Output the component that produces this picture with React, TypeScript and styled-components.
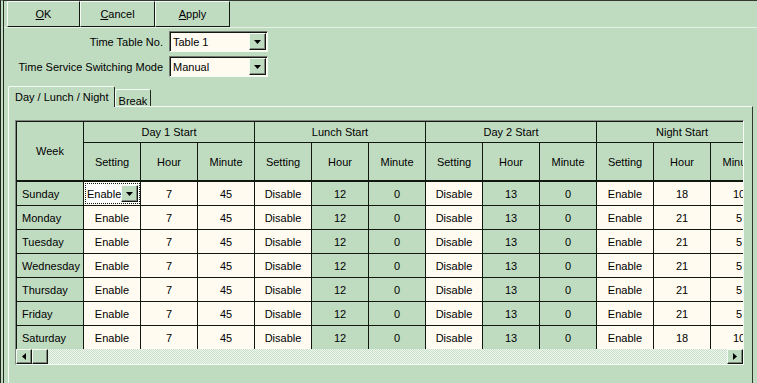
import React from 'react';
import styled, { createGlobalStyle } from 'styled-components';

const GlobalStyle = createGlobalStyle`
  body {
    margin: 0;
    background: #c0dcc0;
    font-family: "Liberation Sans", Arial, sans-serif;
    font-size: 11px;
    color: #000;
  }
`;

const GREEN = '#c0dcc0';
const CREAM = '#fffbf0';

const Window = styled.div`
  width: 757px;
  height: 383px;
  box-sizing: border-box;
  border-top: 1px solid #303830;
  border-left: 4px double #202820;
  background: ${GREEN};
  overflow: hidden;
  display: flex;
  flex-direction: column;
`;

const Toolbar = styled.div`
  display: flex;
  padding-left: 3px;
  height: 26px;
  border-bottom: 1px solid #e4f0e4;
`;

const ToolButton = styled.button<{ $w: number }>`
  width: ${(p) => p.$w}px;
  height: 26px;
  box-sizing: border-box;
  background: ${GREEN};
  border-top: 1px solid #f4fbf4;
  border-left: 1px solid #f4fbf4;
  border-right: 1px solid #101810;
  border-bottom: 1px solid #101810;
  font: inherit;
  padding: 0;
  text-align: center;
`;

const Form = styled.div`
  display: flex;
  flex-direction: column;
  gap: 4px;
  margin-top: 3px;
`;

const FormRow = styled.div`
  display: flex;
  align-items: center;
  height: 21px;
`;

const Label = styled.span`
  width: 159px;
  text-align: right;
  margin-right: 6px;
  white-space: nowrap;
`;

const Select = styled.div<{ $w: number }>`
  width: ${(p) => p.$w}px;
  height: 21px;
  box-sizing: border-box;
  display: flex;
  align-items: center;
  background: ${CREAM};
  border-top: 1px solid #707870;
  border-left: 1px solid #707870;
  border-right: 1px solid #f4fbf4;
  border-bottom: 1px solid #f4fbf4;
  box-shadow: inset 1px 1px 0 #101810;
`;

const SelectText = styled.span<{ $pad?: number }>`
  flex: 1;
  padding-left: ${(p) => p.$pad ?? 3}px;
`;

const DropButton = styled.span<{ $size: number }>`
  width: ${(p) => p.$size}px;
  height: ${(p) => p.$size}px;
  box-sizing: border-box;
  display: flex;
  align-items: center;
  justify-content: center;
  background: ${GREEN};
  border-top: 1px solid #f4fbf4;
  border-left: 1px solid #f4fbf4;
  border-right: 1px solid #101810;
  border-bottom: 1px solid #101810;
  box-shadow: inset -1px -1px 0 #808880;
  margin-right: 1px;
`;

const TabStrip = styled.div`
  display: flex;
  align-items: flex-end;
  height: 20px;
  margin: 9px 0 0 4px;
  position: relative;
  z-index: 1;
`;

const Tab = styled.div<{ $active?: boolean }>`
  height: ${(p) => (p.$active ? 21 : 17)}px;
  margin-bottom: ${(p) => (p.$active ? -1 : 0)}px;
  box-sizing: border-box;
  padding: ${(p) => (p.$active ? '4px 5px 0 6px' : '5px 3px 0 3px')};
  background: ${GREEN};
  border-top: 1px solid #f4fbf4;
  border-left: 1px solid #f4fbf4;
  border-right: 1px solid #202820;
  border-radius: 2px 2px 0 0;
  white-space: nowrap;
`;

const Panel = styled.div`
  flex: 1;
  margin: 0 4px 0 4px;
  border-top: 1px solid #f4fbf4;
  border-left: 1px solid #f4fbf4;
  border-right: 1px solid #303830;
  padding: 13px 0 0 6px;
`;

const GridFrame = styled.div`
  width: 729px;
  height: 245px;
  box-sizing: border-box;
  border-top: 1px solid #808880;
  border-left: 1px solid #808880;
  border-right: 1px solid #f4fbf4;
  border-bottom: 1px solid #f4fbf4;
  display: flex;
  flex-direction: column;
`;

const Viewport = styled.div`
  width: 727px;
  height: 228px;
  overflow: hidden;
`;

const Grid = styled.div`
  display: grid;
  grid-template-columns: 67px repeat(12, 57px);
  grid-template-rows: 21px 39px repeat(7, 24px);
  width: max-content;
  border-top: 1px solid #101810;
  border-left: 1px solid #101810;
`;

const Cell = styled.div<{ $bg?: string; $left?: boolean; $thick?: boolean; $span?: number; $rows?: number }>`
  box-sizing: border-box;
  background: ${(p) => p.$bg ?? GREEN};
  border-right: 1px solid #101810;
  border-bottom: ${(p) => (p.$thick ? 2 : 1)}px solid #101810;
  display: flex;
  align-items: center;
  justify-content: ${(p) => (p.$left ? 'flex-start' : 'center')};
  padding-left: ${(p) => (p.$left ? 5 : 0)}px;
  white-space: nowrap;
  grid-column: span ${(p) => p.$span ?? 1};
  grid-row: span ${(p) => p.$rows ?? 1};
`;

const EditorCell = styled.div`
  box-sizing: border-box;
  background: ${CREAM};
  border-right: 1px solid #101810;
  border-bottom: 1px solid #101810;
  display: flex;
  padding: 1px;
`;

const Editor = styled.div`
  flex: 1;
  display: flex;
  align-items: center;
  border: 1px dotted #101810;
  background: #fff;
  padding-left: 1px;
`;

const ScrollBar = styled.div`
  display: flex;
  height: 15px;
  width: 727px;
  background: repeating-conic-gradient(#c8e0c8 0 25%, #f0f6f0 0 50%) 0 0 / 2px 2px;
`;

const ScrollButton = styled.div`
  width: 16px;
  height: 15px;
  box-sizing: border-box;
  display: flex;
  align-items: center;
  justify-content: center;
  background: ${GREEN};
  border-top: 1px solid #f4fbf4;
  border-left: 1px solid #f4fbf4;
  border-right: 1px solid #101810;
  border-bottom: 1px solid #101810;
  box-shadow: inset -1px -1px 0 #808880;
`;

const Spacer = styled.div`
  flex: 1;
`;

const Arrow: React.FC<{ dir: 'down' | 'left' | 'right' }> = ({ dir }) => {
  if (dir === 'down') {
    return (
      <svg width="7" height="4" viewBox="0 0 7 4">
        <path d="M0 0h7L3.5 4z" fill="#000" />
      </svg>
    );
  }
  return (
    <svg width="4" height="7" viewBox="0 0 4 7">
      <path d={dir === 'left' ? 'M4 0v7L0 3.5z' : 'M0 0v7l4-3.5z'} fill="#000" />
    </svg>
  );
};

const days = ['Sunday', 'Monday', 'Tuesday', 'Wednesday', 'Thursday', 'Friday', 'Saturday'];
const nightHour = [18, 21, 21, 21, 21, 21, 18];
const nightMin = [10, 5, 5, 5, 5, 5, 10];
const groups = ['Day 1 Start', 'Lunch Start', 'Day 2 Start', 'Night Start'];

const App: React.FC = () => {
  return (
    <>
      <GlobalStyle />
      <Window>
        <Toolbar>
          <ToolButton $w={73}><u>O</u>K</ToolButton>
          <ToolButton $w={75}><u>C</u>ancel</ToolButton>
          <ToolButton $w={75}><u>A</u>pply</ToolButton>
        </Toolbar>
        <Form>
          <FormRow>
            <Label>Time Table No.</Label>
            <Select $w={99}>
              <SelectText>Table 1</SelectText>
              <DropButton $size={17}><Arrow dir="down" /></DropButton>
            </Select>
          </FormRow>
          <FormRow>
            <Label>Time Service Switching Mode</Label>
            <Select $w={99}>
              <SelectText>Manual</SelectText>
              <DropButton $size={17}><Arrow dir="down" /></DropButton>
            </Select>
          </FormRow>
        </Form>
        <TabStrip>
          <Tab $active>Day / Lunch / Night</Tab>
          <Tab>Break</Tab>
        </TabStrip>
        <Panel>
          <GridFrame>
            <Viewport>
              <Grid>
                <Cell $rows={2} $thick>Week</Cell>
                {groups.map((g) => (
                  <Cell key={g} $span={3}>{g}</Cell>
                ))}
                {groups.map((g) => (
                  <React.Fragment key={g}>
                    <Cell $thick>Setting</Cell>
                    <Cell $thick>Hour</Cell>
                    <Cell $thick>Minute</Cell>
                  </React.Fragment>
                ))}
                {days.map((d, i) => (
                  <React.Fragment key={d}>
                    <Cell $left>{d}</Cell>
                    {i === 0 ? (
                      <EditorCell>
                        <Editor>
                          <SelectText $pad={0}>Enable</SelectText>
                          <DropButton $size={17}><Arrow dir="down" /></DropButton>
                        </Editor>
                      </EditorCell>
                    ) : (
                      <Cell $bg={CREAM}>Enable</Cell>
                    )}
                    <Cell $bg={CREAM}>7</Cell>
                    <Cell $bg={CREAM}>45</Cell>
                    <Cell $bg={CREAM}>Disable</Cell>
                    <Cell>12</Cell>
                    <Cell>0</Cell>
                    <Cell $bg={CREAM}>Disable</Cell>
                    <Cell>13</Cell>
                    <Cell>0</Cell>
                    <Cell $bg={CREAM}>Enable</Cell>
                    <Cell $bg={CREAM}>{nightHour[i]}</Cell>
                    <Cell $bg={CREAM}>{nightMin[i]}</Cell>
                  </React.Fragment>
                ))}
              </Grid>
            </Viewport>
            <ScrollBar>
              <ScrollButton><Arrow dir="left" /></ScrollButton>
              <ScrollButton />
              <Spacer />
              <ScrollButton><Arrow dir="right" /></ScrollButton>
            </ScrollBar>
          </GridFrame>
        </Panel>
      </Window>
    </>
  );
};

export default App;
